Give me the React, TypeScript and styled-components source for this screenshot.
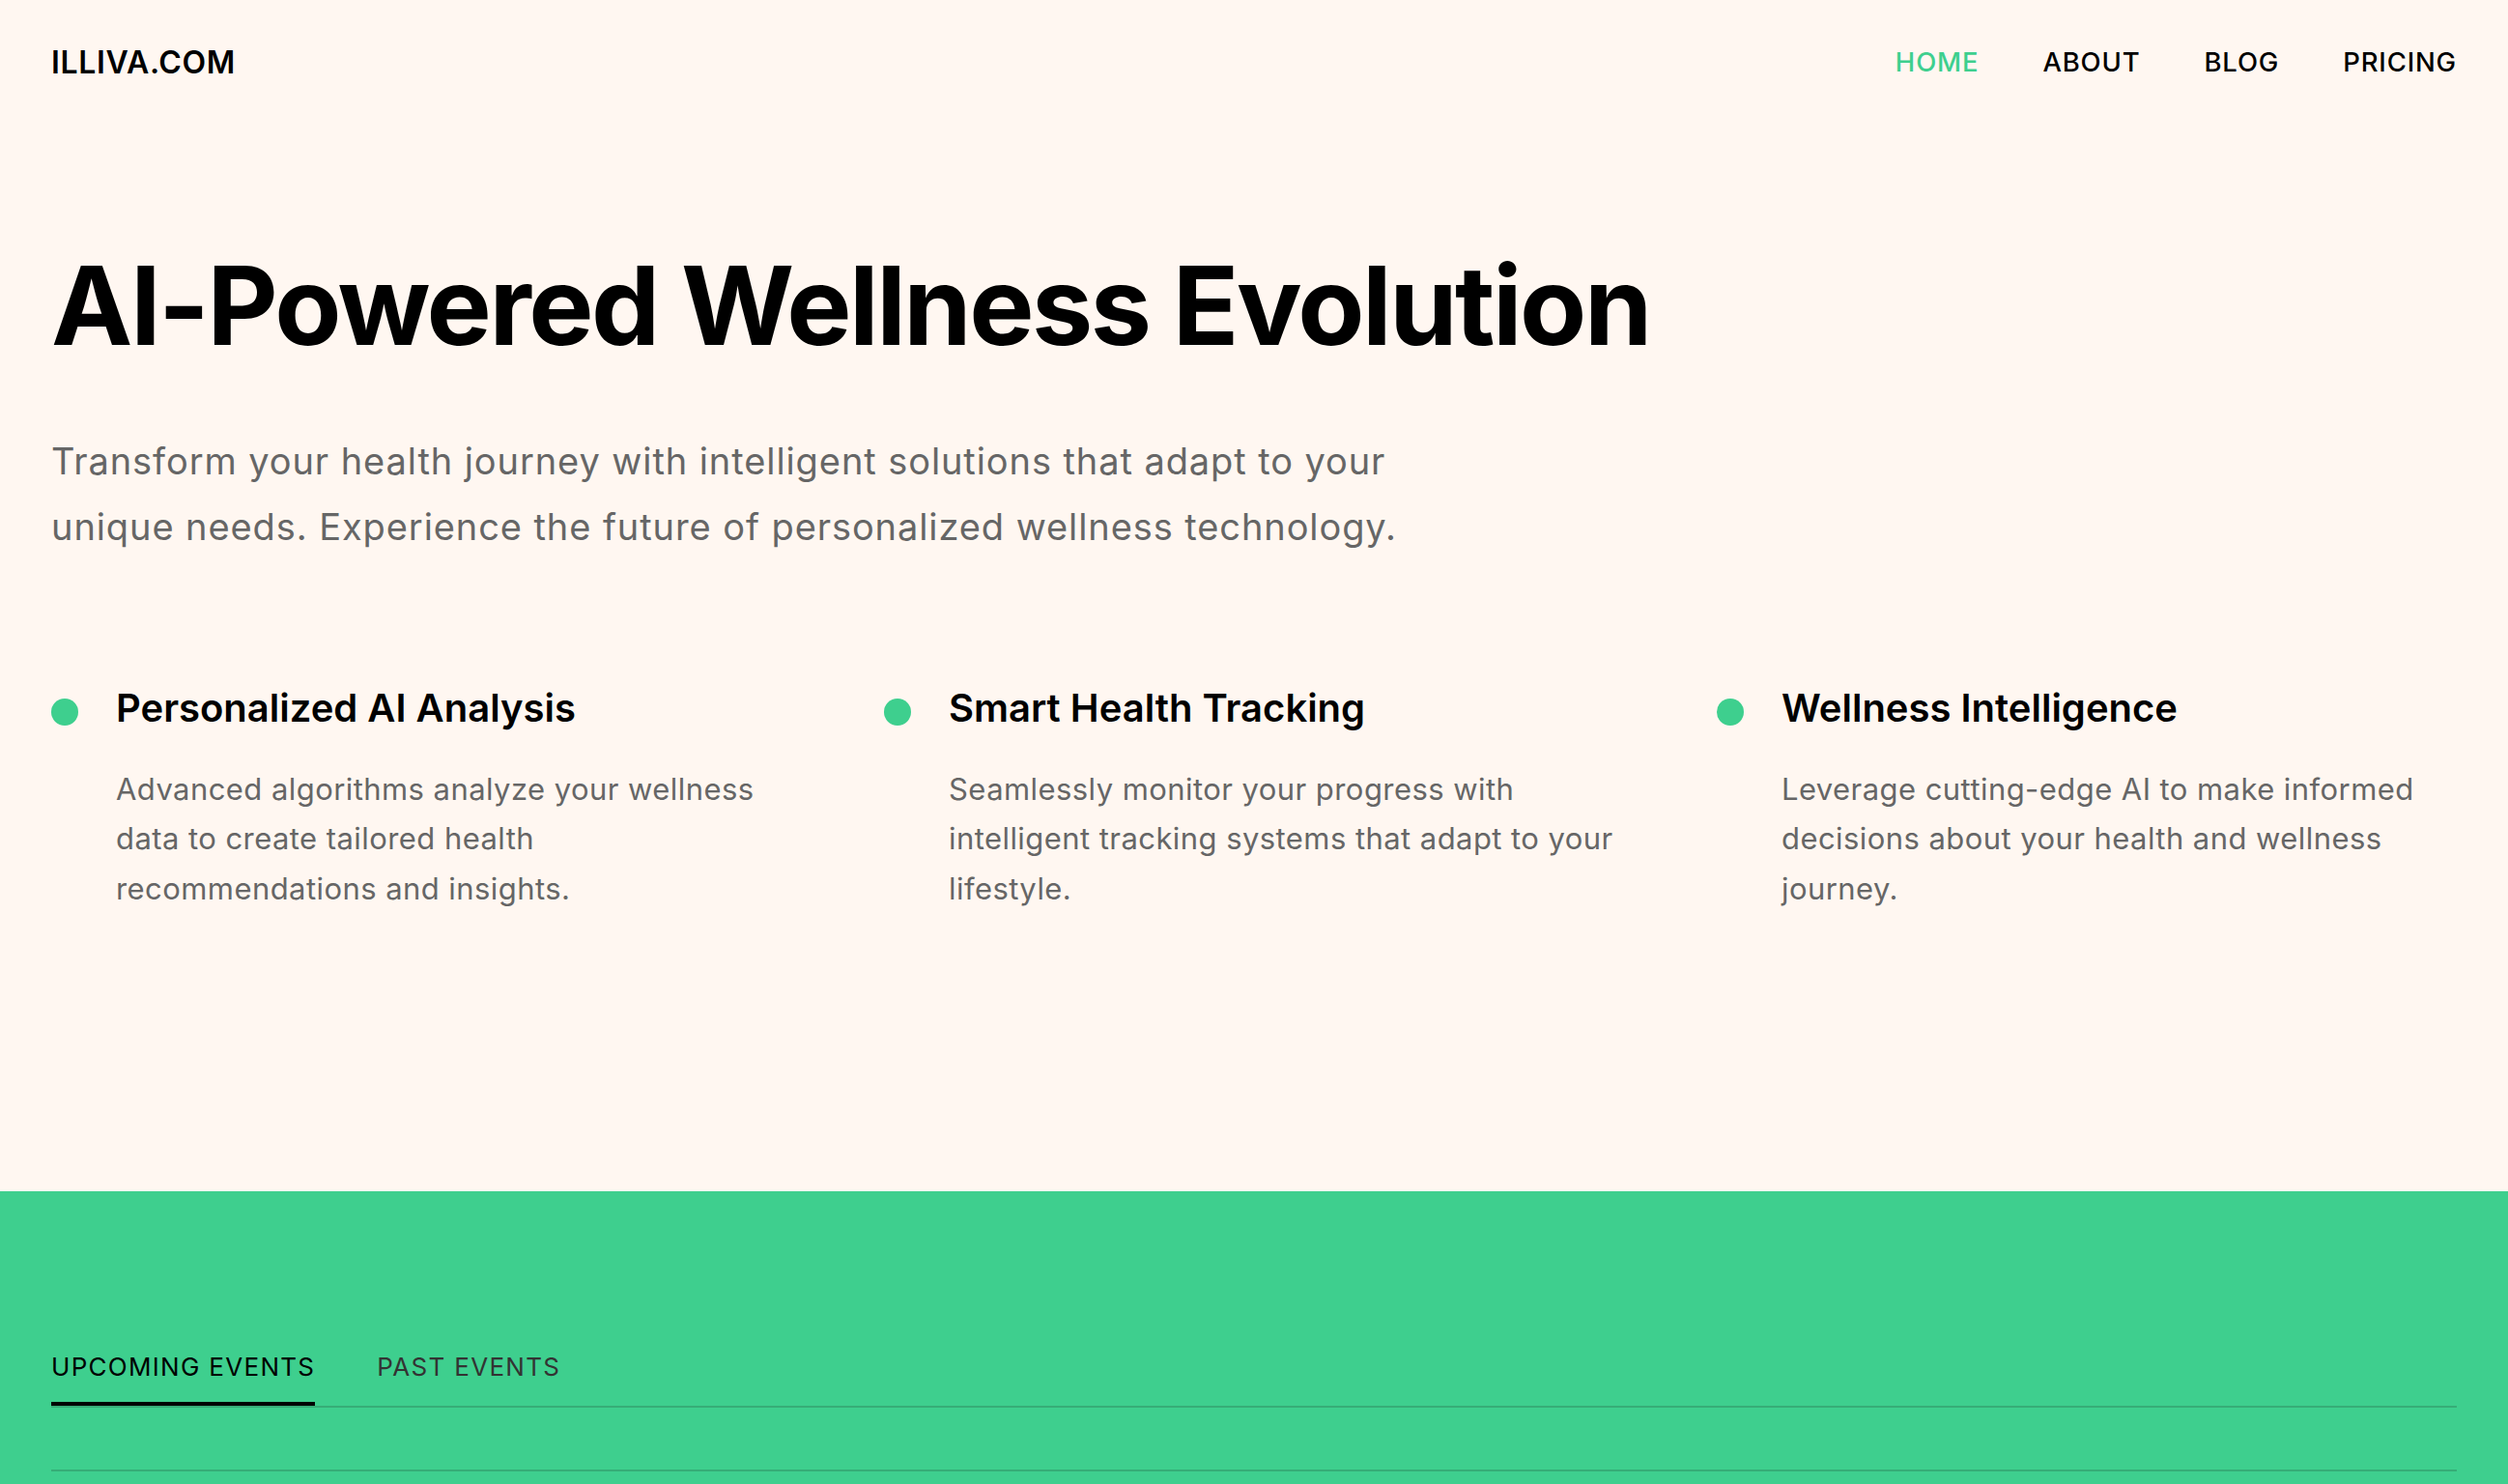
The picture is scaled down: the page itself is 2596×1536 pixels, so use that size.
import styled, { createGlobalStyle } from 'styled-components';

const GlobalStyle = createGlobalStyle`
  * { box-sizing: border-box; }
  body {
    margin: 0;
    background: #fff7f1;
    font-family: Inter, "Noto Sans", sans-serif;
    color: #000;
  }
`;

const GREEN = '#3ecf8e';

const Header = styled.header`
  height: 128px;
  padding: 0 53px;
  display: flex;
  align-items: center;
  justify-content: space-between;
`;

const Logo = styled.a`
  font-size: 32px;
  font-weight: 600;
  letter-spacing: 0.02em;
  color: #000;
  text-decoration: none;
`;

const Nav = styled.nav`
  display: flex;
  gap: 66px;
`;

const NavLink = styled.a<{ $active?: boolean }>`
  font-size: 27.5px;
  font-weight: 500;
  letter-spacing: 0.03em;
  color: ${p => (p.$active ? GREEN : '#000')};
  text-decoration: none;
`;

const Hero = styled.section`
  padding: 0 53px 288px;
`;

const Title = styled.h1`
  margin: 121px 0 0;
  font-size: 113px;
  font-weight: 700;
  line-height: 1.2;
  letter-spacing: -0.022em;
`;

const Lead = styled.p`
  margin: 58px 0 0;
  max-width: 1440px;
  font-size: 38px;
  line-height: 68px;
  letter-spacing: 0.024em;
  color: #666;
`;

const Features = styled.div`
  margin-top: 126px;
  display: grid;
  grid-template-columns: repeat(3, 1fr);
  gap: 96px;
`;

const Feature = styled.div`
  display: grid;
  grid-template-columns: 28px 1fr;
  column-gap: 39px;
`;

const Dot = styled.span`
  width: 28px;
  height: 28px;
  margin-top: 18px;
  border-radius: 50%;
  background: ${GREEN};
`;

const FeatureTitle = styled.h3`
  margin: 0;
  font-size: 40px;
  font-weight: 600;
  line-height: 56px;
`;

const FeatureText = styled.p`
  grid-column: 2;
  max-width: 696px;
  margin: 30px 0 0;
  font-size: 31px;
  line-height: 51.5px;
  letter-spacing: 0.014em;
  color: #666;
`;

const Events = styled.section`
  background: ${GREEN};
  padding: 162px 53px 200px;
`;

const TabList = styled.div`
  display: flex;
  gap: 64px;
  border-bottom: 2px solid #36ad77;
`;

const Tab = styled.button<{ $active?: boolean }>`
  padding: 0 0 17px;
  border: 0;
  border-bottom: 4px solid ${p => (p.$active ? '#000' : 'transparent')};
  background: none;
  font-family: inherit;
  font-size: 26px;
  line-height: 39px;
  letter-spacing: 0.05em;
  color: ${p => (p.$active ? '#000' : '#333')};
  cursor: pointer;
`;

const EventRow = styled.div`
  height: 66px;
  border-bottom: 2px solid #36ad77;
`;

const features = [
  {
    title: 'Personalized AI Analysis',
    text: 'Advanced algorithms analyze your wellness data to create tailored health recommendations and insights.',
  },
  {
    title: 'Smart Health Tracking',
    text: 'Seamlessly monitor your progress with intelligent tracking systems that adapt to your lifestyle.',
  },
  {
    title: 'Wellness Intelligence',
    text: 'Leverage cutting-edge AI to make informed decisions about your health and wellness journey.',
  },
];

export default function App() {
  return (
    <>
      <GlobalStyle />
      <Header>
        <Logo href="#">ILLIVA.COM</Logo>
        <Nav>
          <NavLink href="#" $active>HOME</NavLink>
          <NavLink href="#">ABOUT</NavLink>
          <NavLink href="#">BLOG</NavLink>
          <NavLink href="#">PRICING</NavLink>
        </Nav>
      </Header>
      <Hero>
        <Title>AI-Powered Wellness Evolution</Title>
        <Lead>
          Transform your health journey with intelligent solutions that adapt to your unique
          needs. Experience the future of personalized wellness technology.
        </Lead>
        <Features>
          {features.map(f => (
            <Feature key={f.title}>
              <Dot />
              <FeatureTitle>{f.title}</FeatureTitle>
              <FeatureText>{f.text}</FeatureText>
            </Feature>
          ))}
        </Features>
      </Hero>
      <Events>
        <TabList>
          <Tab $active>UPCOMING EVENTS</Tab>
          <Tab>PAST EVENTS</Tab>
        </TabList>
        <EventRow />
      </Events>
    </>
  );
}
